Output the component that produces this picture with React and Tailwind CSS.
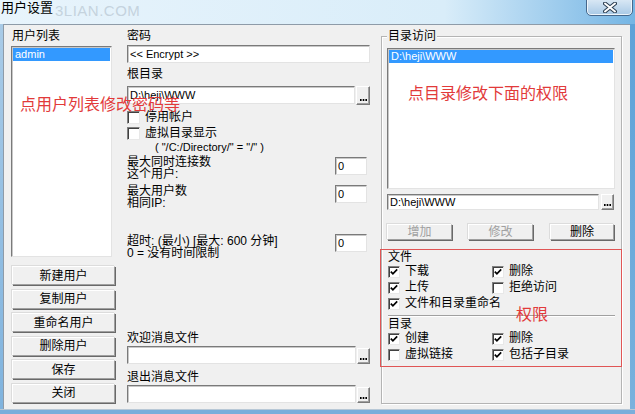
import React from "react";

function Field({ className = "", children }) {
  return (
    <div
      className={`bg-white border border-t-[#7a7a7a] border-l-[#7a7a7a] border-r-[#e3e3e3] border-b-[#e3e3e3] shadow-[inset_1px_1px_0_#c8c8c8] text-[11px] leading-none flex items-center pl-[2px] text-black whitespace-nowrap overflow-hidden ${className}`}
    >
      {children}
    </div>
  );
}

function Browse({ className = "" }) {
  return (
    <div
      className={`bg-[#f0f0f0] border border-t-white border-l-white border-r-[#7a7a7a] border-b-[#7a7a7a] shadow-[inset_-1px_-1px_0_#a0a0a0] flex items-end justify-center pb-[3px] ${className}`}
    >
      <svg width="7" height="2" viewBox="0 0 7 2">
        <rect x="0" y="0" width="1.6" height="2" fill="#000" />
        <rect x="2.7" y="0" width="1.6" height="2" fill="#000" />
        <rect x="5.4" y="0" width="1.6" height="2" fill="#000" />
      </svg>
    </div>
  );
}

function Check({ checked, size = "w-[13px] h-[13px]" }) {
  return (
    <span
      className={`${size} bg-white border border-t-[#808080] border-l-[#808080] border-r-[#e8e8e8] border-b-[#e8e8e8] shadow-[inset_1px_1px_0_#404040] flex items-center justify-center shrink-0`}
    >
      {checked && (
        <svg width="8" height="8" viewBox="0 0 8 8">
          <path d="M0.8 3.6 L2.9 5.8 L7.2 1.4" stroke="#000" strokeWidth="1.7" fill="none" />
        </svg>
      )}
    </span>
  );
}

function Btn({ children, className = "", disabled = false }) {
  return (
    <div
      className={`flex items-center justify-center bg-[#f0f0f0] border border-t-white border-l-white border-r-[#a0a0a0] border-b-[#a0a0a0] shadow-[1px_1px_0_#696969,-1px_-1px_0_#dcdcdc] text-[12px] leading-none ${disabled ? "text-[#a0a0a0]" : "text-black"} ${className}`}
    >
      {children}
    </div>
  );
}

function CRow({ checked, label, className = "" }) {
  return (
    <div className={`flex items-center gap-[5px] h-[13px] ${className}`}>
      <Check checked={checked} size="w-[12px] h-[12px]" />
      <span className="text-[12px] leading-[13px] whitespace-nowrap">{label}</span>
    </div>
  );
}

export default function App() {
  return (
    <div className="w-[635px] h-[414px] relative overflow-hidden flex flex-col bg-[#7fb6e2] font-[Liberation_Sans,Noto_Sans_CJK_SC,sans-serif] text-black select-none">
      {/* title bar */}
      <div className="h-[24px] relative bg-linear-to-r from-[#e8f4fc] via-[#d9edf9] via-70% to-[#74b5e4] shrink-0">
        <span className="absolute left-[55px] top-[3px] text-[15px] leading-none text-[#c5d3de] tracking-[0.5px]">3LIAN.COM</span>
        <span className="absolute left-[1px] top-[0px] text-[13px] leading-[15px] text-black">用户设置</span>
        <div className="absolute left-[586px] top-[-2px] w-[47px] h-[18px] rounded-b-[5px] border border-[#46688c] bg-linear-to-b from-[#dbe9f5] to-[#a8c9e6] shadow-[inset_0_0_0_1px_#eef5fb] flex items-center justify-center">
          <svg width="14" height="11" viewBox="0 0 14 11">
            <path d="M2 1.5 L12 9.5 M12 1.5 L2 9.5" stroke="#2b3e52" strokeWidth="4" strokeLinecap="round" />
            <path d="M2 1.5 L12 9.5 M12 1.5 L2 9.5" stroke="#ffffff" strokeWidth="2" strokeLinecap="round" />
          </svg>
        </div>
      </div>

      {/* body row */}
      <div className="flex h-[385px] shrink-0">
        <div className="w-[3px] bg-linear-to-b from-[#a9cbe7] to-[#7fb3de]" />
        <div className="w-[627px] flex bg-[#f0f0f0] border-l border-t border-[#8e9ba8] pl-[7px] pt-[4px]">
          {/* left column */}
          <div className="w-[104px] flex flex-col">
            <div className="h-[15px] leading-[15px] text-[12px] pl-[1px]">用户列表</div>
            <div className="mt-[2px] w-[101px] h-[211px] bg-white border border-t-[#7a7a7a] border-l-[#7a7a7a] border-r-[#e3e3e3] border-b-[#e3e3e3] shadow-[inset_1px_1px_0_#c8c8c8] p-[1px]">
              <div className="h-[13px] bg-[#3399ff] text-white text-[11px] leading-[13px] pl-[2px]">admin</div>
            </div>
            <div className="mt-[9px] ml-[1px] flex flex-col gap-[4.5px]">
              <Btn className="w-[103px] h-[19px]">新建用户</Btn>
              <Btn className="w-[103px] h-[19px]">复制用户</Btn>
              <Btn className="w-[103px] h-[19px]">重命名用户</Btn>
              <Btn className="w-[103px] h-[19px]">删除用户</Btn>
              <Btn className="w-[103px] h-[19px]">保存</Btn>
              <Btn className="w-[103px] h-[19px]">关闭</Btn>
            </div>
          </div>

          {/* middle column */}
          <div className="ml-[12px] w-[243px] flex flex-col text-[12px]">
            <div className="h-[15px] leading-[15px]">密码</div>
            <Field className="mt-[1px] h-[18px] w-[243px]">&lt;&lt; Encrypt &gt;&gt;</Field>
            <div className="mt-[4px] h-[15px] leading-[15px]">根目录</div>
            <div className="mt-[4px] flex h-[18px]">
              <Field className="w-[228px] h-[18px]">D:\heji\WWW</Field>
              <Browse className="ml-[1px] w-[14px] h-[19px]" />
            </div>
            <div className="mt-[6px] flex items-center gap-[5px] h-[14px]">
              <Check checked={false} />
              <span className="leading-[14px]">停用帐户</span>
            </div>
            <div className="mt-[2px] flex items-center gap-[5px] h-[14px]">
              <Check checked={false} />
              <span className="leading-[14px]">虚拟目录显示</span>
            </div>
            <div className="mt-[1px] pl-[28px] h-[13px] text-[11px] leading-[13px] whitespace-nowrap">( "/C:/Directory/" = "/" )</div>
            <div className="mt-[2px] flex justify-between">
              <div className="leading-[12px]">
                <div>最大同时连接数</div>
                <div>这个用户:</div>
              </div>
              <Field className="mr-[3px] w-[32px] h-[18px] mt-[1px]">0</Field>
            </div>
            <div className="mt-[5px] flex justify-between">
              <div className="leading-[12px]">
                <div>最大用户数</div>
                <div>相同IP:</div>
              </div>
              <Field className="mr-[3px] w-[32px] h-[18px]">0</Field>
            </div>
            <div className="mt-[25px] flex justify-between">
              <div className="leading-[12px] mt-[1px] whitespace-nowrap">
                <div>超时: (最小) [最大: 600 分钟]</div>
                <div>0 = 没有时间限制</div>
              </div>
              <Field className="mr-[3px] w-[32px] h-[18px]">0</Field>
            </div>
            <div className="mt-[72px] h-[15px] leading-[15px]">欢迎消息文件</div>
            <div className="flex items-end h-[18px]">
              <Field className="w-[229px] h-[18px]">{""}</Field>
              <Browse className="ml-[1px] w-[13px] h-[16px]" />
            </div>
            <div className="mt-[6px] h-[15px] leading-[15px]">退出消息文件</div>
            <div className="flex items-end h-[18px]">
              <Field className="w-[229px] h-[18px]">{""}</Field>
              <Browse className="ml-[1px] w-[13px] h-[16px]" />
            </div>
          </div>

          {/* right group */}
          <div className="ml-[11px] mt-[7px] w-[241px] h-[368px] relative border border-[#b4b4b4] shadow-[inset_1px_1px_0_#ffffff,1px_1px_0_#ffffff] pl-[5px] pt-[11px] text-[12px]">
            <span className="absolute left-[5px] top-[-8px] px-[1px] bg-[#f0f0f0] leading-[15px]">目录访问</span>
            <div className="w-[228px] h-[141px] bg-white border border-t-[#7a7a7a] border-l-[#7a7a7a] border-r-[#e3e3e3] border-b-[#e3e3e3] shadow-[inset_1px_1px_0_#c8c8c8] p-[1px]">
              <div className="h-[13px] bg-[#3399ff] text-white text-[11px] leading-[13px] pl-[2px]">D:\heji\WWW</div>
            </div>
            <div className="mt-[5px] flex h-[16px]">
              <Field className="w-[212px] h-[16px]">D:\heji\WWW</Field>
              <Browse className="ml-[2px] w-[13px] h-[16px]" />
            </div>
            <div className="mt-[14px] flex">
              <Btn className="w-[65px] h-[16px]" disabled>增加</Btn>
              <Btn className="ml-[16px] w-[65px] h-[16px]" disabled>修改</Btn>
              <Btn className="ml-[17px] w-[64px] h-[16px]">删除</Btn>
            </div>
            <div className="ml-[1px] flex flex-col">
              <div className="mt-[11px] h-[13px] leading-[13px]">文件</div>
              <div className="mt-[1px] grid grid-cols-[104px_1fr]">
                <CRow checked label="下载" />
                <CRow checked label="删除" />
              </div>
              <div className="mt-[3px] grid grid-cols-[104px_1fr]">
                <CRow checked label="上传" />
                <CRow checked={false} label="拒绝访问" />
              </div>
              <CRow className="mt-[3px]" checked label="文件和目录重命名" />
              <div className="mt-[5px] w-[227px] h-[2px] border-t border-[#a0a0a0] border-b border-b-white" />
              <div className="mt-[1px] h-[13px] leading-[13px]">目录</div>
              <div className="mt-[1px] grid grid-cols-[104px_1fr]">
                <CRow checked label="创建" />
                <CRow checked label="删除" />
              </div>
              <div className="mt-[3px] grid grid-cols-[104px_1fr]">
                <CRow checked={false} label="虚拟链接" />
                <CRow checked label="包括子目录" />
              </div>
            </div>
          </div>
        </div>
        <div className="w-[5px] bg-linear-to-b from-[#5da2d8] to-[#79b1dd]" />
      </div>
      <div className="flex-1 bg-[#7aaedb] border-t border-[#b8c8d6]" />

      {/* annotations */}
      <div className="absolute left-[380px] top-[249px] w-[242px] h-[118px] border border-[#e05555] pointer-events-none" />
      <span className="absolute left-[20px] top-[95px] text-[16px] leading-[20px] text-[#e23a3a] whitespace-nowrap">点用户列表修改密码等</span>
      <span className="absolute left-[408px] top-[84px] text-[16px] leading-[20px] text-[#e23a3a] whitespace-nowrap">点目录修改下面的权限</span>
      <span className="absolute left-[516px] top-[305px] text-[16px] leading-[20px] text-[#e23a3a] whitespace-nowrap">权限</span>
    </div>
  );
}
